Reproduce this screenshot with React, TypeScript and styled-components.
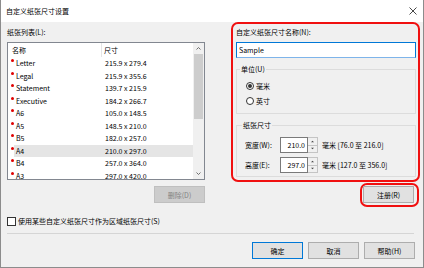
import styled, { createGlobalStyle } from 'styled-components';

const GlobalStyle = createGlobalStyle`
  html, body {
    margin: 0;
    padding: 0;
    background: #f0f0f0;
  }
  body {
    font-family: "Noto Sans CJK SC", "Noto Sans", sans-serif;
    font-size: 7px;
    color: #000;
  }
`;

const papers = [
    { name: 'Letter', size: '215.9 x 279.4' },
    { name: 'Legal', size: '215.9 x 355.6' },
    { name: 'Statement', size: '139.7 x 215.9' },
    { name: 'Executive', size: '184.2 x 266.7' },
    { name: 'A6', size: '105.0 x 148.5' },
    { name: 'A5', size: '148.5 x 210.0' },
    { name: 'B5', size: '182.0 x 257.0' },
    { name: 'A4', size: '210.0 x 297.0', selected: true },
    { name: 'B4', size: '257.0 x 364.0' },
    { name: 'A3', size: '297.0 x 420.0' },
];

function SpinButtons() {
    return (
        <Spinner>
            <SpinHalf>
                <SpinIcon viewBox="0 0 6 4"><path d="M1 3 L3 1 L5 3 Z" fill="#444" /></SpinIcon>
            </SpinHalf>
            <SpinHalf>
                <SpinIcon viewBox="0 0 6 4"><path d="M1 1 L3 3 L5 1 Z" fill="#444" /></SpinIcon>
            </SpinHalf>
        </Spinner>
    );
}

function App() {
    return (
        <>
            <GlobalStyle />
            <Window>
                <TitleBar>
                    <span>自定义纸张尺寸设置</span>
                    <CloseIcon viewBox="0 0 8 8">
                        <path d="M0.5 0.5 L7.5 7.5 M7.5 0.5 L0.5 7.5" stroke="#333" strokeWidth="0.9" />
                    </CloseIcon>
                </TitleBar>
                <Body>
                    <Main>
                        <LeftCol>
                            <Caption>纸张列表(L):</Caption>
                            <ListBox>
                                <ListArea>
                                    <HeaderRow>
                                        <HeadName>名称</HeadName>
                                        <HeadSize>尺寸</HeadSize>
                                    </HeaderRow>
                                    {papers.map((p) => (
                                        <Row key={p.name}>
                                            <Marker><Dot /></Marker>
                                            <RowBody $selected={!!p.selected}>
                                                <NameCell>{p.name}</NameCell>
                                                <SizeCell>{p.size}</SizeCell>
                                            </RowBody>
                                        </Row>
                                    ))}
                                </ListArea>
                                <ScrollBar>
                                    <ScrollArrow viewBox="0 0 11 11">
                                        <path d="M3.5 6.5 L5.5 4.5 L7.5 6.5" stroke="#606060" strokeWidth="0.9" fill="none" />
                                    </ScrollArrow>
                                    <Thumb />
                                    <Track />
                                    <ScrollArrow viewBox="0 0 11 11">
                                        <path d="M3.5 4.5 L5.5 6.5 L7.5 4.5" stroke="#606060" strokeWidth="0.9" fill="none" />
                                    </ScrollArrow>
                                </ScrollBar>
                            </ListBox>
                            <DisabledButton>删除(D)</DisabledButton>
                        </LeftCol>
                        <RightCol>
                            <RedFrame>
                                <Caption>自定义纸张尺寸名称(N):</Caption>
                                <NameInput>Sample</NameInput>
                                <Group>
                                    <Legend $offset={3}>单位(U)</Legend>
                                    <RadioRow>
                                        <Radio $checked />
                                        <span>毫米</span>
                                    </RadioRow>
                                    <RadioRow>
                                        <Radio />
                                        <span>英寸</span>
                                    </RadioRow>
                                </Group>
                                <Group $second>
                                    <Legend $offset={5}>纸张尺寸</Legend>
                                    <SizeRow>
                                        <SizeLabel>宽度(W):</SizeLabel>
                                        <NumberBox>210.0</NumberBox>
                                        <SpinButtons />
                                        <RangeText>毫米 [76.0 至 216.0]</RangeText>
                                    </SizeRow>
                                    <SizeRow>
                                        <SizeLabel>高度(E):</SizeLabel>
                                        <NumberBox>297.0</NumberBox>
                                        <SpinButtons />
                                        <RangeText>毫米 [127.0 至 356.0]</RangeText>
                                    </SizeRow>
                                </Group>
                            </RedFrame>
                            <RegisterRow>
                                <RedRing>
                                    <Button>注册(R)</Button>
                                </RedRing>
                            </RegisterRow>
                        </RightCol>
                    </Main>
                    <CheckRow>
                        <CheckBox />
                        <span>使用某些自定义纸张尺寸作为区域纸张尺寸(S)</span>
                    </CheckRow>
                    <Separator />
                    <Footer>
                        <Button $primary>确定</Button>
                        <Button>取消</Button>
                        <Button>帮助(H)</Button>
                    </Footer>
                </Body>
            </Window>
        </>
    );
}

const Window = styled.div`
    width: 424px;
    height: 268px;
    box-sizing: border-box;
    border: 1px solid #8c8c8c;
    border-top: none;
    background: #f0f0f0;
    display: flex;
    flex-direction: column;
`

const TitleBar = styled.div`
    height: 22px;
    flex-shrink: 0;
    background: #fff;
    display: flex;
    align-items: center;
    justify-content: space-between;
    padding: 0 6px 0 5px;
`

const CloseIcon = styled.svg`
    width: 8px;
    height: 8px;
`

const Body = styled.div`
    display: flex;
    flex-direction: column;
    padding: 0 3px 0 6px;
`

const Main = styled.div`
    display: flex;
    align-items: flex-start;
`

const LeftCol = styled.div`
    width: 198px;
    padding-top: 5px;
    display: flex;
    flex-direction: column;
`

const Caption = styled.div`
    line-height: 11px;
    height: 11px;
    margin-bottom: 4px;
    white-space: nowrap;
`

const ListBox = styled.div`
    height: 138px;
    box-sizing: border-box;
    border: 1px solid #828790;
    background: #fff;
    display: flex;
    overflow: hidden;
`

const ListArea = styled.div`
    flex: 1;
    display: flex;
    flex-direction: column;
`

const HeaderRow = styled.div`
    height: 14px;
    flex-shrink: 0;
    display: flex;
    align-items: center;
`

const HeadName = styled.div`
    width: 89px;
    padding-left: 4px;
    height: 14px;
    line-height: 14px;
    border-right: 1px solid #e5e5e5;
`

const HeadSize = styled.div`
    padding-left: 2px;
`

const Row = styled.div`
    height: 12.5px;
    flex-shrink: 0;
    display: flex;
`

const Marker = styled.div`
    width: 6px;
    flex-shrink: 0;
`

const Dot = styled.div`
    width: 3px;
    height: 3px;
    margin: 2px 0 0 3px;
    border-radius: 50%;
    background: #e00000;
`

const RowBody = styled.div<{ $selected?: boolean }>`
    flex: 1;
    display: flex;
    align-items: center;
    background: ${(p) => (p.$selected ? '#e5e5e5' : 'transparent')};
`

const NameCell = styled.div`
    width: 85px;
    padding-left: 2px;
`

const SizeCell = styled.div`
    padding-left: 4px;
`

const ScrollBar = styled.div`
    width: 11px;
    flex-shrink: 0;
    background: #f0f0f0;
    display: flex;
    flex-direction: column;
`

const ScrollArrow = styled.svg`
    width: 11px;
    height: 11px;
    flex-shrink: 0;
`

const Thumb = styled.div`
    height: 65px;
    margin: 0 1px;
    background: #cdcdcd;
`

const Track = styled.div`
    flex: 1;
`

const Button = styled.div<{ $primary?: boolean }>`
    width: 51px;
    height: 17px;
    box-sizing: border-box;
    display: flex;
    align-items: center;
    justify-content: center;
    background: #e1e1e1;
    border: 1px solid ${(p) => (p.$primary ? '#0078d7' : '#adadad')};
`

const DisabledButton = styled(Button)`
    align-self: flex-end;
    margin-top: 6px;
    background: #cccccc;
    border-color: #bfbfbf;
    color: #838383;
`

const RightCol = styled.div`
    flex: 1;
    margin-left: 26px;
    display: flex;
    flex-direction: column;
`

const RedFrame = styled.div`
    border: 2px solid #f01010;
    border-radius: 7px;
    padding: 3px 2px 3px 3px;
    display: flex;
    flex-direction: column;
`

const NameInput = styled.div`
    height: 16px;
    box-sizing: border-box;
    background: #fff;
    border: 1px solid #0078d7;
    border-bottom-color: #7eb4ea;
    padding-left: 2px;
    line-height: 14px;
`

const Group = styled.fieldset<{ $second?: boolean }>`
    margin: 6px 0 0 0;
    padding: ${(p) => (p.$second ? '7px 0 3px 8px' : '4px 0 5px 9px')};
    border: 1px solid #dcdcdc;
    min-width: 0;
    display: flex;
    flex-direction: column;
    gap: ${(p) => (p.$second ? '4px' : '0')};
`

const Legend = styled.legend<{ $offset: number }>`
    margin-left: ${(p) => p.$offset - (p.$offset === 3 ? 9 : 8)}px;
    padding: 0 1px;
    line-height: 10px;
`

const RadioRow = styled.div`
    height: 15px;
    display: flex;
    align-items: center;
    gap: 2px;
`

const Radio = styled.div<{ $checked?: boolean }>`
    width: 8px;
    height: 8px;
    box-sizing: border-box;
    border-radius: 50%;
    border: 1px solid #333;
    background: #fff;
    display: flex;
    align-items: center;
    justify-content: center;
    &::after {
        content: '';
        width: 4px;
        height: 4px;
        border-radius: 50%;
        background: ${(p) => (p.$checked ? '#333' : 'transparent')};
    }
`

const SizeRow = styled.div`
    height: 16px;
    display: flex;
    align-items: center;
`

const SizeLabel = styled.div`
    width: 35px;
`

const NumberBox = styled.div`
    width: 28px;
    height: 16px;
    box-sizing: border-box;
    background: #fff;
    border: 1px solid #7a7a7a;
    text-align: right;
    padding-right: 2px;
    line-height: 14px;
`

const Spinner = styled.div`
    width: 10px;
    height: 16px;
    display: flex;
    flex-direction: column;
`

const SpinHalf = styled.div`
    flex: 1;
    box-sizing: border-box;
    border: 1px solid #c4c4c4;
    border-left: none;
    background: #f0f0f0;
    display: flex;
    align-items: center;
    justify-content: center;
    & + & {
        border-top: none;
    }
`

const SpinIcon = styled.svg`
    width: 5px;
    height: 3px;
`

const RangeText = styled.div`
    margin-left: 4px;
    white-space: nowrap;
`

const RegisterRow = styled.div`
    display: flex;
    justify-content: flex-end;
    margin-top: 1px;
    padding-right: 1px;
`

const RedRing = styled.div`
    border: 2px solid #f01010;
    border-radius: 7px;
    padding: 1px 3px 2px 1px;
`

const CheckRow = styled.div`
    margin-top: 9px;
    height: 10px;
    display: flex;
    align-items: center;
    gap: 2px;
`

const CheckBox = styled.div`
    width: 9px;
    height: 9px;
    box-sizing: border-box;
    border: 1px solid #333;
    background: #fff;
`

const Separator = styled.div`
    margin: 7px 6px 0 0;
    height: 1px;
    background: #d5d5d5;
`

const Footer = styled.div`
    margin: 8px 5px 0 0;
    display: flex;
    justify-content: flex-end;
    gap: 5px;
`

export default App;
